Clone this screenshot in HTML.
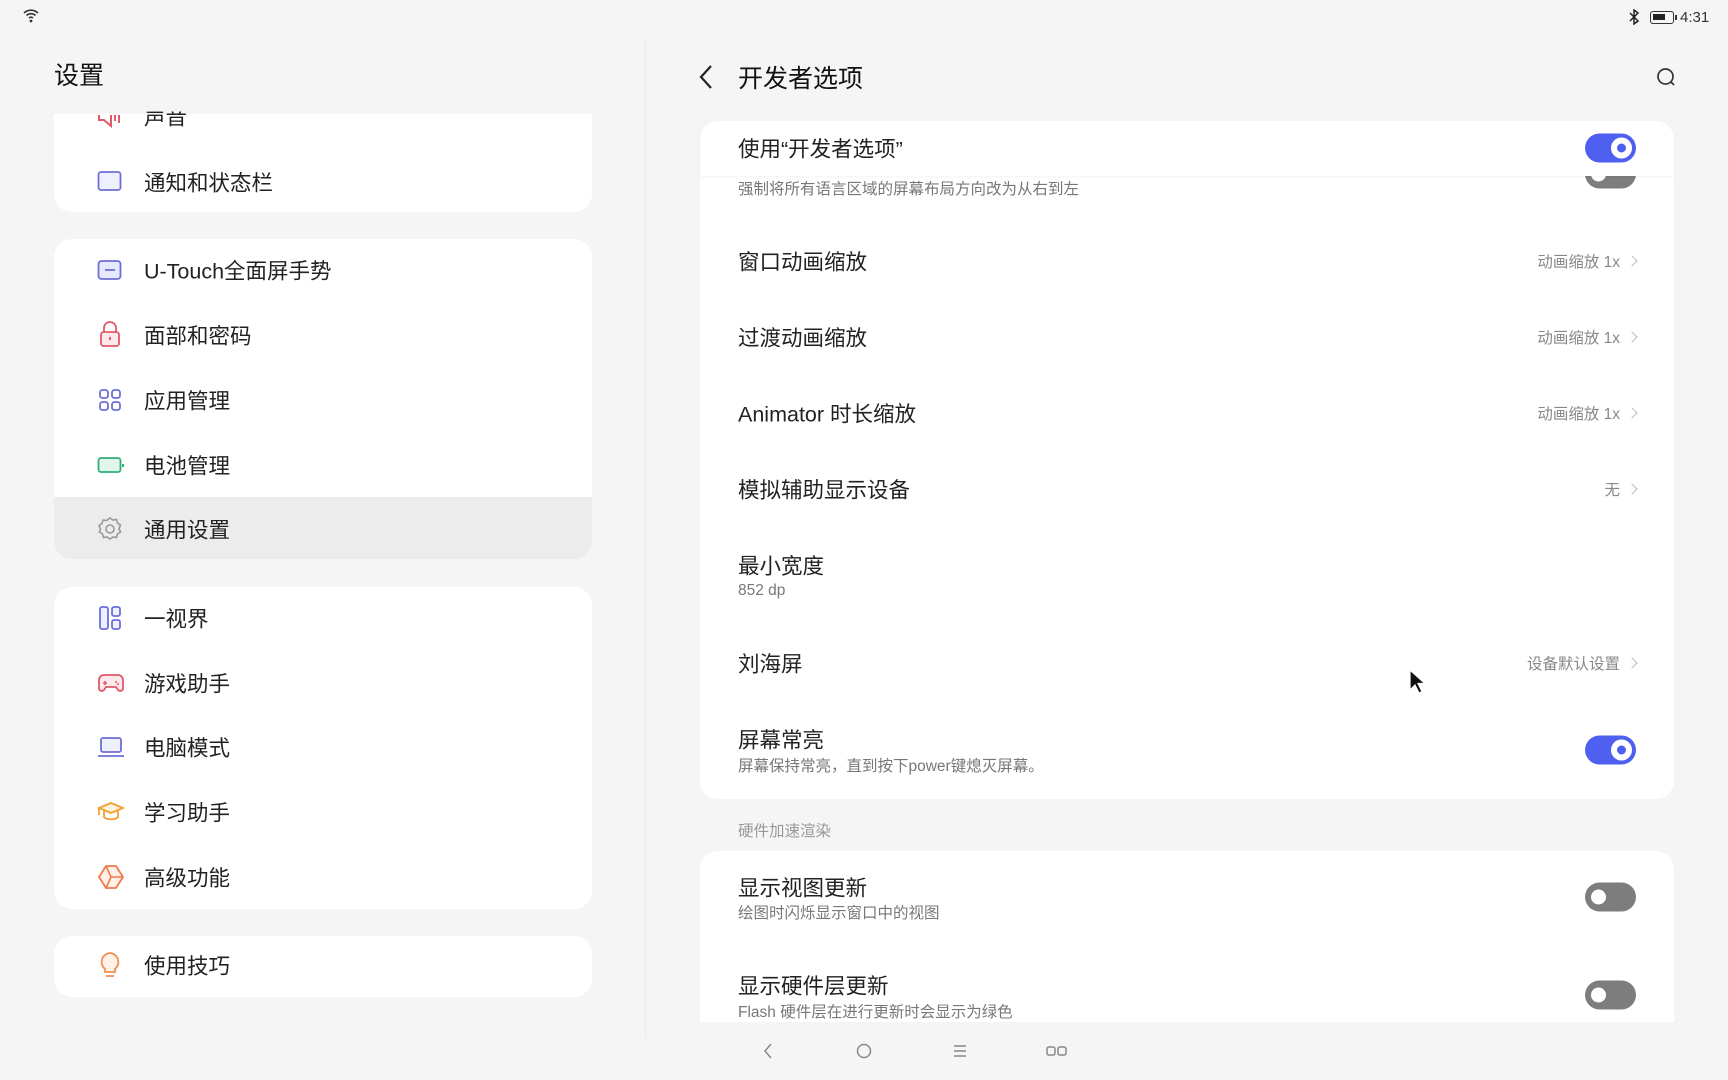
<!DOCTYPE html>
<html><head><meta charset="utf-8"><style>
*{margin:0;padding:0;box-sizing:border-box}
body{width:1728px;height:1080px;background:#f5f5f5;position:relative;overflow:hidden;font-family:"Liberation Sans","Noto Sans CJK SC",sans-serif;color:#222}
.a{position:absolute;white-space:nowrap}
.card{position:absolute;background:#fff;border-radius:18px}
.lt{position:absolute;left:144px;font-size:21.5px;color:#222;transform:translateY(-50%)}
.ic{position:absolute;left:97px;transform:translateY(-50%)}
.rt{position:absolute;left:738px;font-size:21.5px;color:#222;transform:translateY(-50%)}
.st{position:absolute;left:738px;font-size:15.5px;color:#777;transform:translateY(-50%)}
.rv{position:absolute;right:92px;font-size:15.5px;color:#888;transform:translateY(-50%)}
.rv:after{content:"";display:inline-block;width:7px;height:7px;border-right:1.5px solid #bbb;border-top:1.5px solid #bbb;transform:rotate(45deg);margin-left:8px;position:relative;top:-2px}
.tg{position:absolute;left:1585px;width:51px;height:29px;border-radius:15px;transform:translateY(-50%)}
.on{background:#4f5ff0}.on:after{content:"";position:absolute;right:4px;top:4px;width:21px;height:21px;border-radius:50%;background:#fff;box-shadow:inset 0 0 0 6px #fff, inset 0 0 0 11px #4f5ff0}
.on:before{content:"";position:absolute;right:11px;top:11px;width:7px;height:7px;border-radius:50%;background:#4f5ff0;z-index:2}
.off{background:#7d7d7d}.off:after{content:"";position:absolute;left:6px;top:7px;width:15px;height:15px;border-radius:50%;background:#fff}
</style></head><body>
<svg class="a" style="left:22px;top:8px" width="18" height="16" viewBox="0 0 18 16"><path d="M2 5a10 10 0 0 1 14 0M4.5 7.5a6.5 6.5 0 0 1 9 0M7 10a3 3 0 0 1 4 0" stroke="#333" stroke-width="1.6" fill="none"/><circle cx="9" cy="13" r="1.4" fill="#333"/></svg>
<svg class="a" style="left:1628px;top:9px" width="12" height="16" viewBox="0 0 12 16"><path d="M2 4l8 8-4 3V1l4 3-8 8" stroke="#222" stroke-width="1.5" fill="none"/></svg>
<div class="a" style="left:1650px;top:11px;width:24px;height:13px;border:1.5px solid #333;border-radius:3px"><div style="position:absolute;left:2px;top:2px;width:12px;height:6px;background:#222"></div></div>
<div class="a" style="left:1675px;top:15px;width:2px;height:5px;background:#333"></div>
<div class="a" style="left:1680px;top:9px;font-size:15px;color:#333">4:31</div>

<div class="a" style="left:54px;top:56px;font-size:25px;color:#111">设置</div>
<div class="a" style="left:645px;top:38px;width:1px;height:1000px;background:#ececec"></div>

<div class="card" style="left:54px;top:100px;width:538px;height:112px;border-radius:0 0 18px 18px"></div>
<div class="card" style="left:54px;top:239px;width:538px;height:320px"></div>
<div style="position:absolute;left:54px;top:497px;width:538px;height:62px;background:#ececec;border-radius:0 0 18px 18px"></div>
<div class="card" style="left:54px;top:587px;width:538px;height:322px"></div>
<div class="card" style="left:54px;top:936px;width:538px;height:61px"></div>
<div class="a" style="left:54px;top:100px;width:538px;height:14px;background:#f5f5f5"></div>

<div class="lt" style="top:116px;clip-path:inset(11px 0 0 0)">声音</div>
<svg class="ic" style="top:116px;clip-path:inset(11px 0 0 0)" width="26" height="24" viewBox="0 0 26 24"><path d="M2 8h5l7-6v20l-7-6H2z M18 7v10M22 5v14" stroke="#e05a6a" stroke-width="2" fill="none"/></svg>
<svg class="ic" style="top:181px" width="26" height="22" viewBox="0 0 26 22"><rect x="1.5" y="2" width="22" height="18" rx="2.5" stroke="#6c6fd8" stroke-width="1.8" fill="#eef0ff"/></svg><div class="lt" style="top:182px">通知和状态栏</div>
<svg class="ic" style="top:270px" width="26" height="22" viewBox="0 0 26 22"><rect x="1.5" y="2" width="22" height="18" rx="3" stroke="#6c6fd8" stroke-width="1.8" fill="#e6e8ff"/><path d="M8 11h10" stroke="#6c6fd8" stroke-width="1.8"/></svg><div class="lt" style="top:270px">U-Touch全面屏手势</div>
<svg class="ic" style="top:334px" width="26" height="28" viewBox="0 0 26 28"><path d="M7 12V8a6 6 0 0 1 12 0v4" stroke="#e05a6a" stroke-width="1.8" fill="none"/><rect x="4" y="12" width="18" height="14" rx="2.5" stroke="#e05a6a" stroke-width="1.8" fill="#fde9ec"/><path d="M13 17v3" stroke="#e05a6a" stroke-width="2"/></svg><div class="lt" style="top:335px">面部和密码</div>
<svg class="ic" style="top:400px" width="26" height="24" viewBox="0 0 26 24"><g stroke="#6c6fd8" stroke-width="1.8" fill="none"><rect x="3" y="2" width="8" height="8" rx="2.5"/><rect x="15" y="2" width="8" height="8" rx="2.5"/><rect x="3" y="14" width="8" height="8" rx="2.5"/><rect x="15" y="14" width="8" height="8" rx="2.5"/></g></svg><div class="lt" style="top:400px">应用管理</div>
<svg class="ic" style="top:465px" width="28" height="20" viewBox="0 0 28 20"><rect x="1.5" y="3" width="22" height="14" rx="2.5" stroke="#2fae78" stroke-width="1.8" fill="#e1f5ec"/><path d="M26 9v3" stroke="#2fae78" stroke-width="2"/></svg><div class="lt" style="top:465px">电池管理</div>
<svg class="ic" style="top:529px" width="26" height="26" viewBox="0 0 26 26"><path d="M13 2l3 2 3.5-.5 1 3.5 3 2-1.5 3.5 1.5 3.5-3 2-1 3.5-3.5-.5-3 2-3-2-3.5.5-1-3.5-3-2L3.5 13 2 9.5l3-2 1-3.5 3.5.5z" stroke="#999" stroke-width="1.6" fill="none"/><circle cx="13" cy="13" r="4" stroke="#999" stroke-width="1.6" fill="none"/></svg><div class="lt" style="top:529px">通用设置</div>
<svg class="ic" style="top:618px" width="26" height="26" viewBox="0 0 26 26"><g stroke="#6c6fd8" stroke-width="1.8" fill="#eef0ff"><rect x="3" y="2" width="8" height="22" rx="2"/><rect x="15" y="2" width="8" height="9" rx="2"/><rect x="15" y="15" width="8" height="9" rx="2"/></g></svg><div class="lt" style="top:618px">一视界</div>
<svg class="ic" style="top:683px" width="28" height="22" viewBox="0 0 28 22"><path d="M7 3h14a5 5 0 0 1 5 5v9a3 3 0 0 1-5 1l-2-3H9l-2 3a3 3 0 0 1-5-1V8a5 5 0 0 1 5-5z" stroke="#e05a6a" stroke-width="1.8" fill="#fde9ec"/><path d="M8 9v4M6 11h4" stroke="#e05a6a" stroke-width="1.6"/><circle cx="19" cy="10" r="1" fill="#e05a6a"/><circle cx="21" cy="12" r="1" fill="#e05a6a"/></svg><div class="lt" style="top:683px">游戏助手</div>
<svg class="ic" style="top:747px" width="28" height="22" viewBox="0 0 28 22"><rect x="4" y="2" width="20" height="14" rx="2" stroke="#6c6fd8" stroke-width="1.8" fill="#eef0ff"/><path d="M1 20h26" stroke="#6c6fd8" stroke-width="1.8"/></svg><div class="lt" style="top:747px">电脑模式</div>
<svg class="ic" style="top:812px" width="28" height="24" viewBox="0 0 28 24"><path d="M2 8l12-5 12 5-12 5z" stroke="#f0a030" stroke-width="1.8" fill="#fff3dc"/><path d="M7 11v6c2 3 12 3 14 0v-6M2 8v7" stroke="#f0a030" stroke-width="1.8" fill="none"/></svg><div class="lt" style="top:812px">学习助手</div>
<svg class="ic" style="top:877px" width="28" height="26" viewBox="0 0 28 26"><path d="M9 2h10l7 11-7 11H9L2 13z" stroke="#ee7a4a" stroke-width="1.8" fill="#fff0e8"/><path d="M9 2l5 11h12M14 13l-5 11" stroke="#ee7a4a" stroke-width="1.6" fill="none"/></svg><div class="lt" style="top:877px">高级功能</div>
<svg class="ic" style="top:965px" width="26" height="28" viewBox="0 0 26 28"><path d="M13 2a9 9 0 0 0-5 16v3h10v-3a9 9 0 0 0-5-16z" stroke="#f09050" stroke-width="1.8" fill="#fff1e6"/><path d="M9 25h8" stroke="#f09050" stroke-width="1.8"/></svg><div class="lt" style="top:965px">使用技巧</div>

<svg class="a" style="left:698px;top:63px" width="16" height="28" viewBox="0 0 16 28"><path d="M13 3L3 14l10 11" stroke="#222" stroke-width="2.2" fill="none"/></svg>
<div class="a" style="left:738px;top:59px;font-size:25px;color:#111">开发者选项</div>
<svg class="a" style="left:1656px;top:67px" width="22" height="22" viewBox="0 0 22 22"><circle cx="9.5" cy="9.5" r="7.5" stroke="#333" stroke-width="1.7" fill="none"/><path d="M15 15l3 3" stroke="#333" stroke-width="1.7"/></svg>

<div class="card" style="left:700px;top:176px;width:974px;height:623px;border-radius:0 0 18px 18px"></div>
<div class="tg off" style="top:174px;clip-path:inset(50% 0 0 0)"></div>
<div class="card" style="left:700px;top:121px;width:974px;height:55px;border-radius:18px 18px 0 0;box-shadow:0 1px 2px rgba(0,0,0,.05)"></div>
<div class="rt" style="top:148px">使用“开发者选项”</div>
<div class="tg on" style="top:148px"></div>
<div class="st" style="top:188px">强制将所有语言区域的屏幕布局方向改为从右到左</div>
<div class="rt" style="top:261px">窗口动画缩放</div><div class="rv" style="top:261px">动画缩放 1x</div>
<div class="rt" style="top:337px">过渡动画缩放</div><div class="rv" style="top:337px">动画缩放 1x</div>
<div class="rt" style="top:413px">Animator 时长缩放</div><div class="rv" style="top:413px">动画缩放 1x</div>
<div class="rt" style="top:489px">模拟辅助显示设备</div><div class="rv" style="top:489px">无</div>
<div class="rt" style="top:565px">最小宽度</div><div class="st" style="top:591px">852 dp</div>
<div class="rt" style="top:663px">刘海屏</div><div class="rv" style="top:663px">设备默认设置</div>
<div class="rt" style="top:739px">屏幕常亮</div><div class="st" style="top:765px">屏幕保持常亮，直到按下power键熄灭屏幕。</div>
<div class="tg on" style="top:750px"></div>

<div class="st" style="top:830px;color:#999">硬件加速渲染</div>
<div class="card" style="left:700px;top:851px;width:974px;height:171px;border-radius:18px 18px 0 0"></div>
<div class="rt" style="top:887px">显示视图更新</div><div class="st" style="top:912px">绘图时闪烁显示窗口中的视图</div>
<div class="tg off" style="top:897px"></div>
<div class="rt" style="top:985px">显示硬件层更新</div><div class="st" style="top:1011px">Flash 硬件层在进行更新时会显示为绿色</div>
<div class="tg off" style="top:995px"></div>

<svg class="a" style="left:762px;top:1042px" width="12" height="18" viewBox="0 0 12 18"><path d="M9 2L3 9l6 7" stroke="#888" stroke-width="1.5" fill="none"/></svg>
<svg class="a" style="left:856px;top:1043px" width="16" height="16"><circle cx="8" cy="8" r="6.5" stroke="#888" stroke-width="1.5" fill="none"/></svg>
<svg class="a" style="left:953px;top:1043px" width="14" height="16"><path d="M1 3h12M1 8h12M1 13h12" stroke="#888" stroke-width="1.5"/></svg>
<svg class="a" style="left:1046px;top:1045px" width="22" height="12"><rect x="1" y="2" width="8" height="8" rx="2" stroke="#888" stroke-width="1.5" fill="none"/><rect x="12" y="2" width="8" height="8" rx="2" stroke="#888" stroke-width="1.5" fill="none"/></svg>

<svg class="a" style="left:1408px;top:668px" width="20" height="28" viewBox="0 0 20 28"><path d="M2 2v20l5-5 4 8 3-1.5-4-8h7z" fill="#111" stroke="#fff" stroke-width="1.2"/></svg>
</body></html>
